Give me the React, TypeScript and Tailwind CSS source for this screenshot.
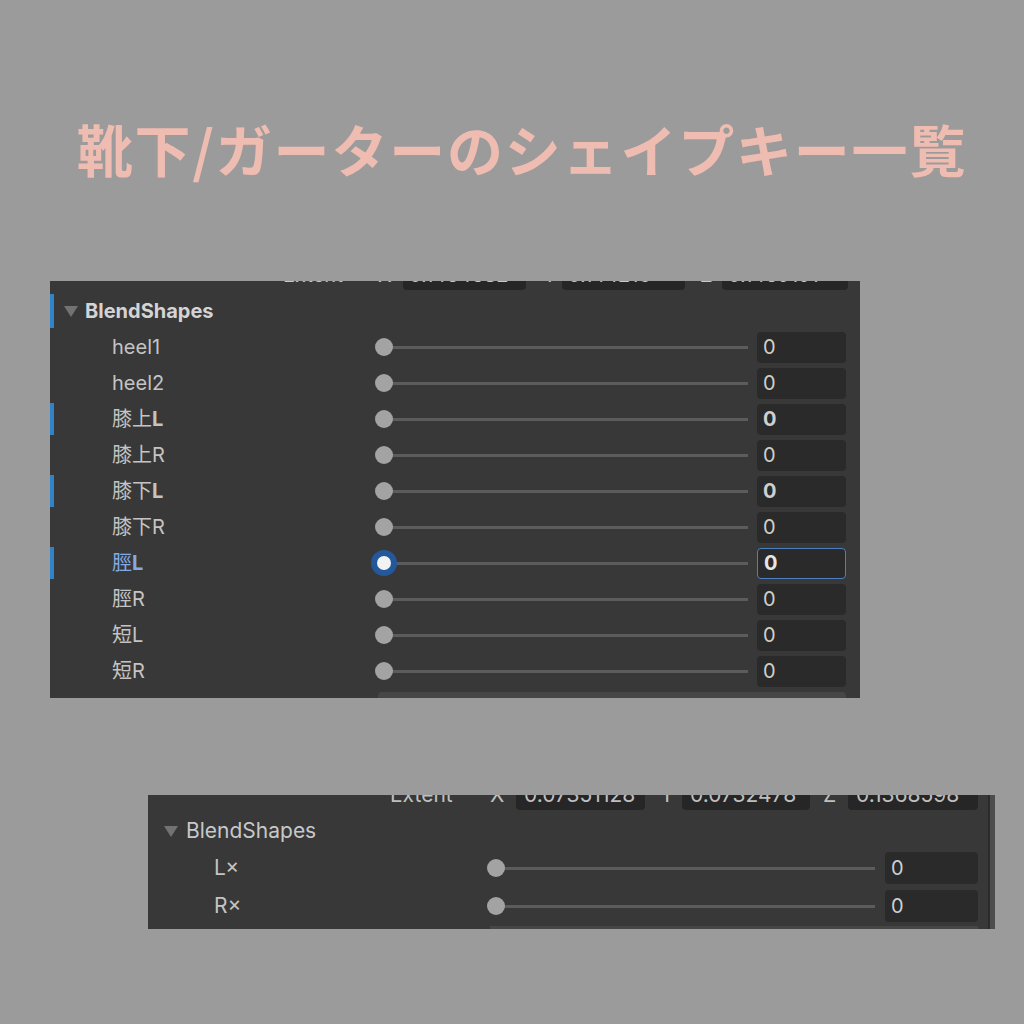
import React from "react";

type Row = { name: string; suffix: string; bold?: boolean; mark?: boolean; selected?: boolean };

const rows: Row[] = [
  { name: "heel1", suffix: "" },
  { name: "heel2", suffix: "" },
  { name: "膝上", suffix: "L", bold: true, mark: true },
  { name: "膝上", suffix: "R" },
  { name: "膝下", suffix: "L", bold: true, mark: true },
  { name: "膝下", suffix: "R" },
  { name: "脛", suffix: "L", bold: true, mark: true, selected: true },
  { name: "脛", suffix: "R" },
  { name: "短", suffix: "L" },
  { name: "短", suffix: "R" },
];

const font = { fontFamily: 'Inter, "Noto Sans CJK JP", sans-serif' };

function Knob({ selected }: { selected?: boolean }) {
  if (selected) {
    return (
      <div className="absolute left-[-4px] top-1/2 -translate-y-1/2 w-[26px] h-[26px] rounded-full bg-[#24589a] flex items-center justify-center">
        <div className="w-[14px] h-[14px] rounded-full bg-[#f2f2f2]" />
      </div>
    );
  }
  return <div className="absolute left-0 top-1/2 -translate-y-1/2 w-[18px] h-[18px] rounded-full bg-[#a3a3a3]" />;
}

function Slider({ width, selected }: { width: string; selected?: boolean }) {
  return (
    <div className={`relative flex items-center h-[18px] ${width}`}>
      <div className="ml-[9px] flex-1 h-[3px] bg-[#5c5c5c]" />
      <Knob selected={selected} />
    </div>
  );
}

function ValueBox({ bold, selected, className }: { bold?: boolean; selected?: boolean; className: string }) {
  return (
    <div
      className={`${className} rounded-[4px] bg-[#2a2a2a] flex items-center pl-[6px] text-[20px] ${
        selected ? "border border-[#4d7fc0] text-[#e6e6e6]" : "text-[#cfcfcf]"
      } ${bold ? "font-bold" : ""}`}
    >
      0
    </div>
  );
}

export default function App() {
  return (
    <div className="w-[1024px] h-[1024px] bg-[#9b9b9b] flex flex-col" style={font}>
      <div className="h-[281px] pt-[120px] flex justify-center">
        <h1
          className="text-[56px] leading-none font-bold text-[#efbcb1] tracking-[1.8px] ml-[20px]"
          style={{ fontFamily: '"Noto Sans CJK JP", sans-serif' }}
        >
          靴下/ガーターのシェイプキー一覧
        </h1>
      </div>

      {/* first inspector */}
      <div className="ml-[50px] w-[810px] h-[417px] bg-[#383838] flex flex-col overflow-hidden">
        <div className="h-[12px] overflow-hidden shrink-0">
          <div className="flex items-center h-[32px] -mt-[22px] text-[20px] text-[#c8c8c8]">
            <span className="ml-[233px] w-[62px]">Extent</span>
            <span className="ml-[33px] w-[20px]">X</span>
            <div className="ml-[5px] w-[123px] h-[30px] rounded-[4px] bg-[#262626] pl-[6px] flex items-center">0.1464682</div>
            <span className="ml-[17px] w-[19px]">Y</span>
            <div className="w-[123px] h-[30px] rounded-[4px] bg-[#262626] pl-[6px] flex items-center">0.144213</div>
            <span className="ml-[15px] w-[22px]">Z</span>
            <div className="w-[126px] h-[30px] rounded-[4px] bg-[#262626] pl-[6px] flex items-center">0.1469191</div>
          </div>
        </div>

        <div className="flex items-center h-[36px] shrink-0">
          <div className="w-[4px] h-[34px] bg-[#2f83c9]" />
          <svg width="14" height="12" viewBox="0 0 14 12" className="ml-[10px]">
            <path d="M0 1 L14 1 L7 12 Z" fill="#727272" />
          </svg>
          <span className="ml-[7px] text-[20px] font-bold text-[#d4d4d4]">BlendShapes</span>
        </div>

        {rows.map((r) => (
          <div key={r.name + r.suffix} className="flex items-center h-[36px] shrink-0">
            <div className={`w-[4px] h-[32px] ${r.mark ? "bg-[#2f83c9]" : ""}`} />
            <div
              className={`w-[321px] pl-[58px] text-[20px] ${
                r.selected ? "text-[#82aae4]" : "text-[#c4c4c4]"
              }`}
            >
              {r.name}
              <span className={r.bold ? "font-bold" : ""}>{r.suffix}</span>
            </div>
            <Slider width="w-[373px]" selected={r.selected} />
            <ValueBox bold={r.bold} selected={r.selected} className="ml-[9px] w-[89px] h-[31px]" />
          </div>
        ))}

        <div className="flex h-[9px] shrink-0 pt-[3px]">
          <div className="ml-[328px] w-[468px] h-[6px] rounded-t-[4px] bg-[#464646]" />
        </div>
      </div>

      {/* second inspector */}
      <div className="mt-[97px] ml-[148px] w-[847px] h-[134px] bg-[#383838] flex overflow-hidden">
        <div className="flex-1 flex flex-col">
          <div className="h-[18px] overflow-hidden shrink-0">
            <div className="flex items-center h-[32px] -mt-[16px] text-[21px] text-[#c0c0c0]">
              <span className="ml-[242px] w-[70px]">Extent</span>
              <span className="ml-[30px] w-[26px]">X</span>
              <div className="w-[129px] h-[30px] rounded-[4px] bg-[#262626] pl-[8px] flex items-center overflow-hidden whitespace-nowrap">0.07351128</div>
              <span className="ml-[15px] w-[22px]">Y</span>
              <div className="w-[128px] h-[30px] rounded-[4px] bg-[#262626] pl-[8px] flex items-center">0.0732478</div>
              <span className="ml-[13px] w-[25px]">Z</span>
              <div className="w-[130px] h-[30px] rounded-[4px] bg-[#262626] pl-[8px] flex items-center">0.1368598</div>
            </div>
          </div>

          <div className="flex items-center h-[36px] shrink-0">
            <svg width="14" height="12" viewBox="0 0 14 12" className="ml-[16px]">
              <path d="M0 1 L14 1 L7 12 Z" fill="#727272" />
            </svg>
            <span className="ml-[8px] text-[21px] text-[#c8c8c8]">BlendShapes</span>
          </div>

          {["L×", "R×"].map((n) => (
            <div key={n} className="flex items-center h-[38px] shrink-0">
              <div className="w-[339px] pl-[66px] text-[21px] text-[#c4c4c4]">{n}</div>
              <Slider width="w-[388px]" />
              <ValueBox className="ml-[10px] w-[93px] h-[32px]" />
            </div>
          ))}

          <div className="flex h-[4px] shrink-0 pt-[1px]">
            <div className="ml-[342px] w-[488px] h-[3px] bg-[#464646]" />
          </div>
        </div>
        <div className="w-[2px] bg-[#2b2b2b]" />
        <div className="w-[5px] bg-[#4d4d4d]" />
      </div>
    </div>
  );
}
